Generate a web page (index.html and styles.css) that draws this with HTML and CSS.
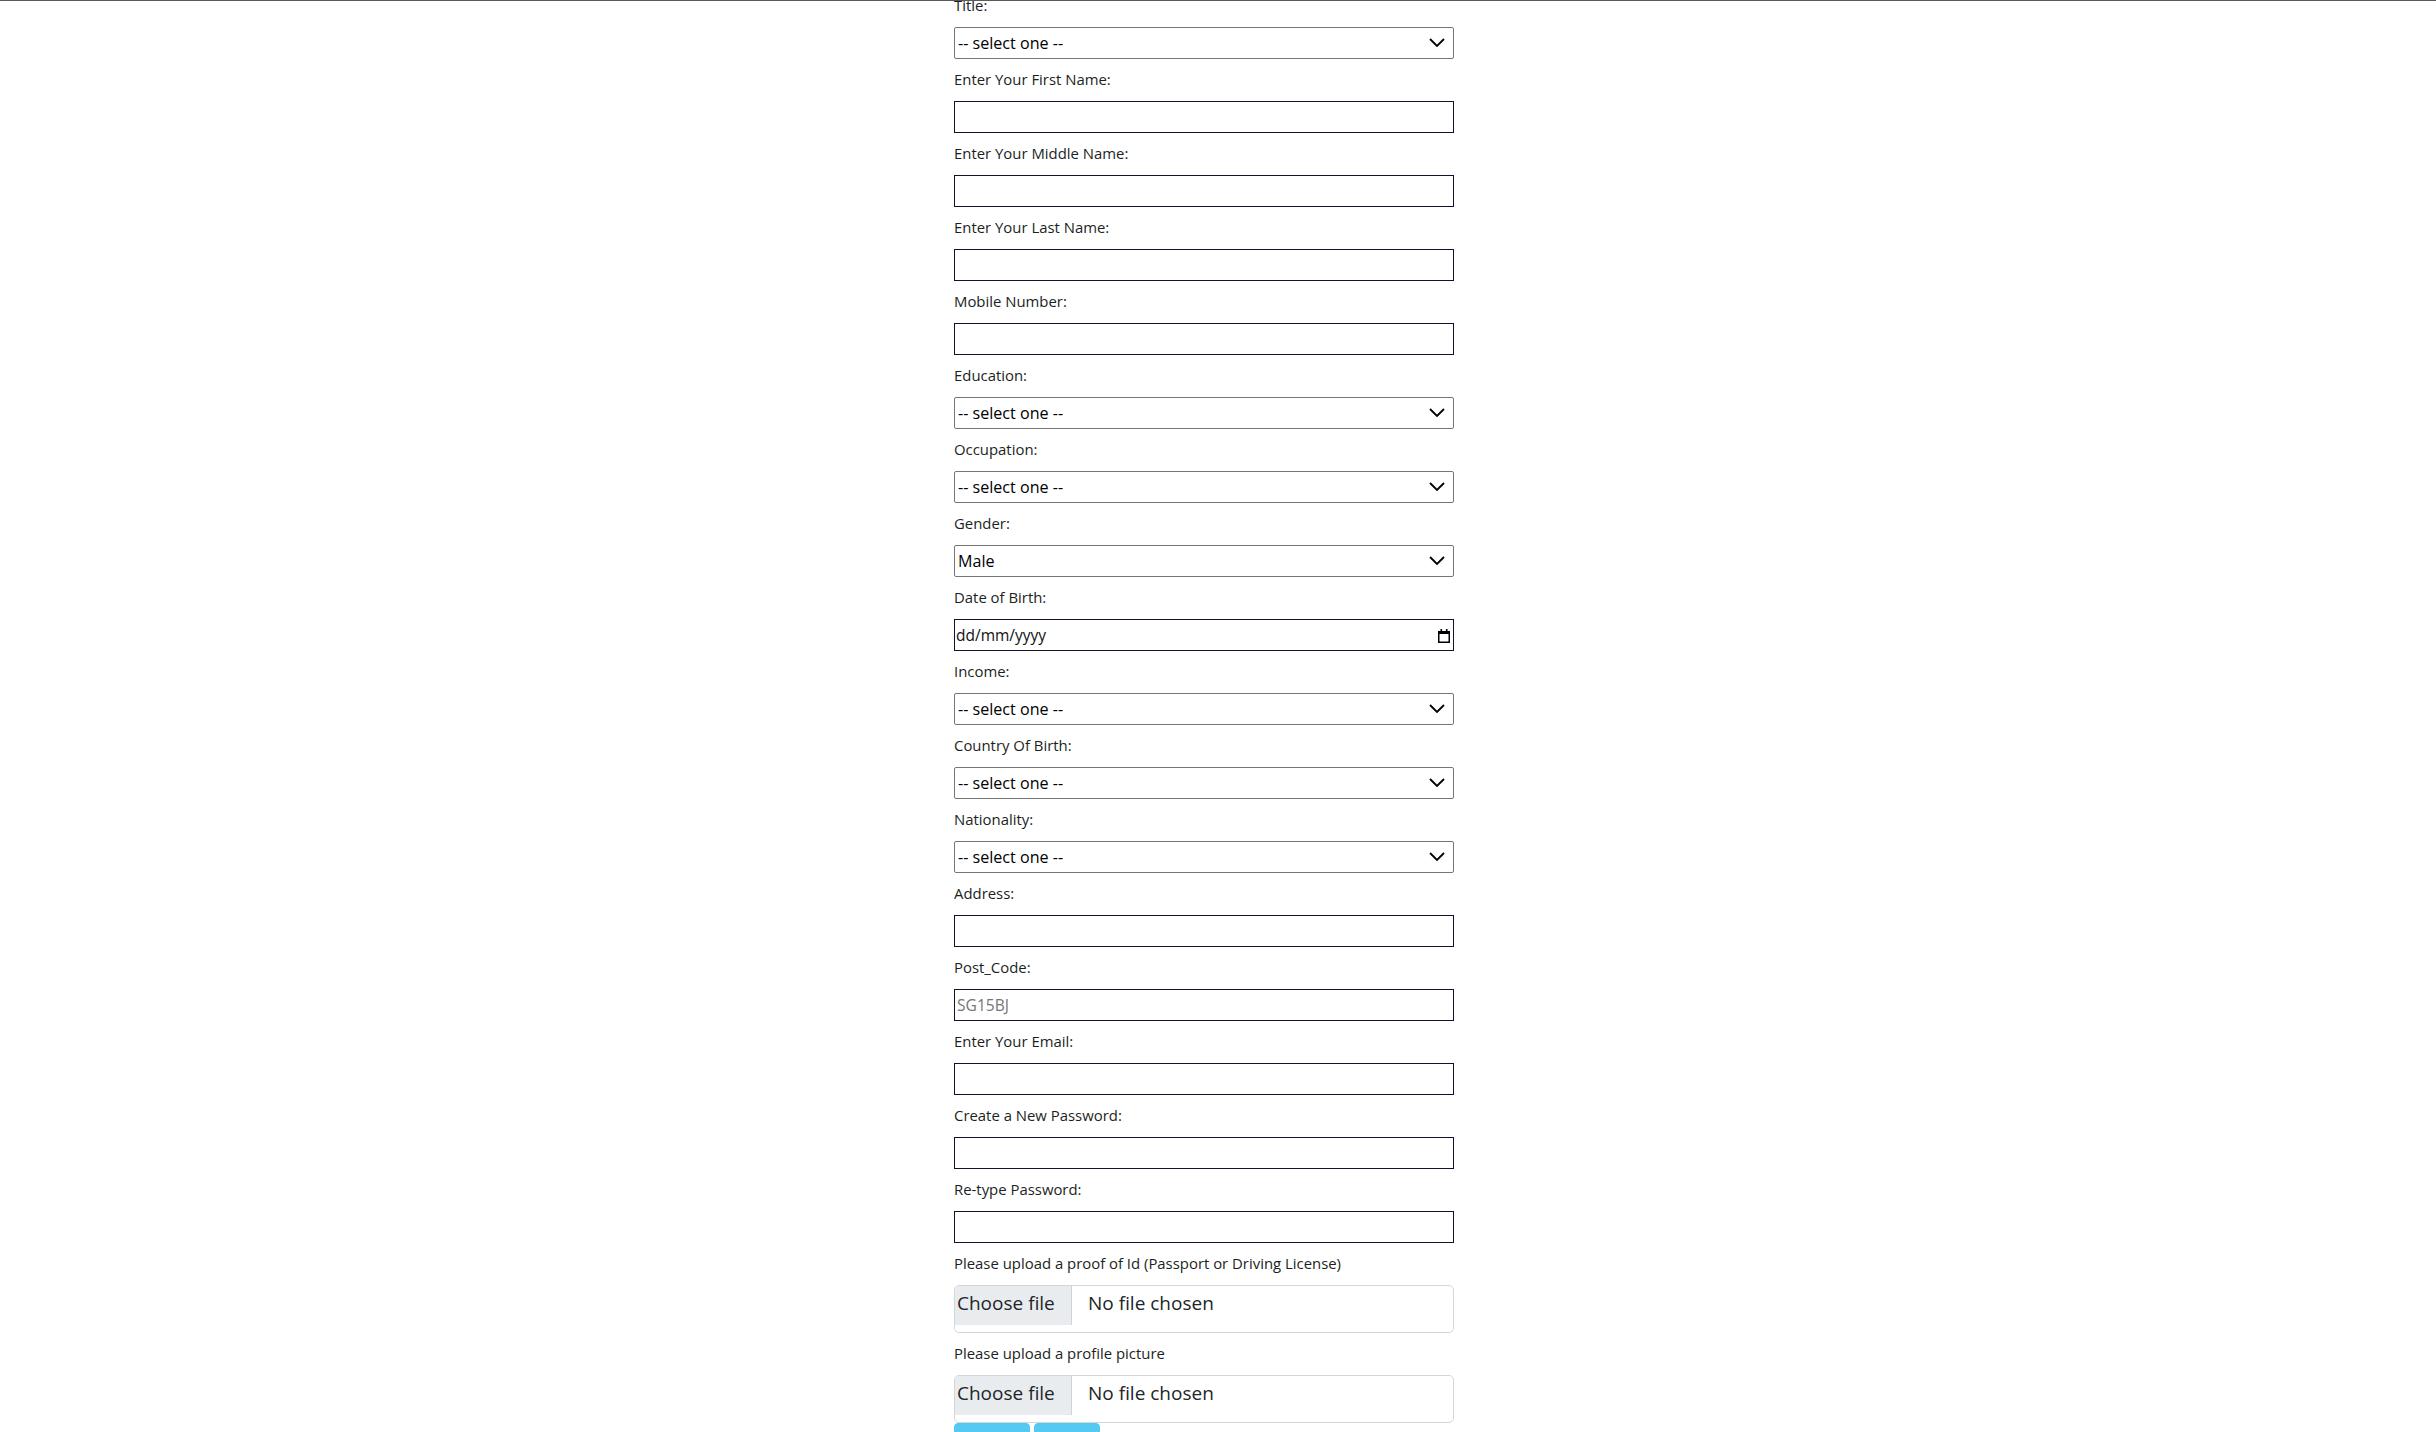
FILE: index.html
```html
<!DOCTYPE html>
<html lang="en">
<head>
<meta charset="utf-8">
<title>Register</title>
<link rel="stylesheet" href="styles.css">
</head>
<body>
<div class="page">
  <form class="form">
    <div class="field">
      <label class="lbl">Title:</label>
      <div class="select-wrap">
        <select class="select"><option>-- select one --</option></select>
        <svg class="chev" width="16" height="9" viewBox="0 0 16 9"><polyline points="1,1 8,8 15,1" fill="none" stroke="#000" stroke-width="1.8"/></svg>
      </div>
    </div>
    <div class="field"><label class="lbl">Enter Your First Name:</label><input class="text" type="text"></div>
    <div class="field"><label class="lbl">Enter Your Middle Name:</label><input class="text" type="text"></div>
    <div class="field"><label class="lbl">Enter Your Last Name:</label><input class="text" type="text"></div>
    <div class="field"><label class="lbl">Mobile Number:</label><input class="text" type="text"></div>
    <div class="field">
      <label class="lbl">Education:</label>
      <div class="select-wrap">
        <select class="select"><option>-- select one --</option></select>
        <svg class="chev" width="16" height="9" viewBox="0 0 16 9"><polyline points="1,1 8,8 15,1" fill="none" stroke="#000" stroke-width="1.8"/></svg>
      </div>
    </div>
    <div class="field">
      <label class="lbl">Occupation:</label>
      <div class="select-wrap">
        <select class="select"><option>-- select one --</option></select>
        <svg class="chev" width="16" height="9" viewBox="0 0 16 9"><polyline points="1,1 8,8 15,1" fill="none" stroke="#000" stroke-width="1.8"/></svg>
      </div>
    </div>
    <div class="field">
      <label class="lbl">Gender:</label>
      <div class="select-wrap">
        <select class="select"><option>Male</option><option>Female</option></select>
        <svg class="chev" width="16" height="9" viewBox="0 0 16 9"><polyline points="1,1 8,8 15,1" fill="none" stroke="#000" stroke-width="1.8"/></svg>
      </div>
    </div>
    <div class="field">
      <label class="lbl">Date of Birth:</label>
      <div class="date-field">
        <span class="date-text">dd/mm/yyyy</span>
        <svg class="cal" width="12" height="14" viewBox="0 0 12 14"><rect x="0.75" y="2.75" width="10.5" height="10.5" fill="none" stroke="#000" stroke-width="1.5"/><rect x="0" y="2" width="12" height="3" fill="#000"/><rect x="2.5" y="0" width="1.6" height="3" fill="#000"/><rect x="7.9" y="0" width="1.6" height="3" fill="#000"/></svg>
      </div>
    </div>
    <div class="field">
      <label class="lbl">Income:</label>
      <div class="select-wrap">
        <select class="select"><option>-- select one --</option></select>
        <svg class="chev" width="16" height="9" viewBox="0 0 16 9"><polyline points="1,1 8,8 15,1" fill="none" stroke="#000" stroke-width="1.8"/></svg>
      </div>
    </div>
    <div class="field">
      <label class="lbl">Country Of Birth:</label>
      <div class="select-wrap">
        <select class="select"><option>-- select one --</option></select>
        <svg class="chev" width="16" height="9" viewBox="0 0 16 9"><polyline points="1,1 8,8 15,1" fill="none" stroke="#000" stroke-width="1.8"/></svg>
      </div>
    </div>
    <div class="field">
      <label class="lbl">Nationality:</label>
      <div class="select-wrap">
        <select class="select"><option>-- select one --</option></select>
        <svg class="chev" width="16" height="9" viewBox="0 0 16 9"><polyline points="1,1 8,8 15,1" fill="none" stroke="#000" stroke-width="1.8"/></svg>
      </div>
    </div>
    <div class="field"><label class="lbl">Address:</label><input class="text" type="text"></div>
    <div class="field"><label class="lbl">Post_Code:</label><input class="text" type="text" placeholder="SG15BJ"></div>
    <div class="field"><label class="lbl">Enter Your Email:</label><input class="text" type="email"></div>
    <div class="field"><label class="lbl">Create a New Password:</label><input class="text" type="password"></div>
    <div class="field"><label class="lbl">Re-type Password:</label><input class="text" type="password"></div>
    <div class="field">
      <span class="lbl">Please upload a proof of Id (Passport or Driving License)</span>
      <label class="file"><input class="file-input" type="file"><span class="file-btn">Choose file</span><span class="file-name">No file chosen</span></label>
    </div>
    <div class="field file-last">
      <span class="lbl">Please upload a profile picture</span>
      <label class="file"><input class="file-input" type="file"><span class="file-btn">Choose file</span><span class="file-name">No file chosen</span></label>
    </div>
    <div class="buttons">
      <button class="btn btn-submit" type="submit">Submit</button>
      <button class="btn btn-reset" type="reset">Reset</button>
    </div>
  </form>
</div>
</body>
</html>
```

FILE: styles.css
```css
html, body {
  margin: 0;
  padding: 0;
  background: #fff;
}

.page {
  height: 100vh;
  box-sizing: border-box;
  border-top: 1px solid #5a5a5a;
  overflow: hidden;
  font-family: "Open Sans", "Noto Sans", sans-serif;
  color: #212529;
}

.form {
  width: 500px;
  margin: -6px 0 0 954px;
}

.field {
  display: flex;
  flex-direction: column;
  margin-bottom: 10px;
}

.field.file-last {
  margin-bottom: 0;
}

.lbl {
  display: block;
  font-size: 14.9px;
  line-height: 21px;
  margin-bottom: 11px;
  color: #1b1f23;
}

.text {
  box-sizing: border-box;
  width: 500px;
  height: 32px;
  margin: 0;
  padding: 1px 2px;
  border: 1px solid #13112e;
  border-radius: 0;
  font-family: "Open Sans", "Noto Sans", sans-serif;
  font-size: 15.6px;
  color: #000;
  background: #fff;
  outline: none;
}

.text::placeholder {
  color: #767676;
}

.select-wrap {
  position: relative;
  width: 500px;
  height: 32px;
}

.select {
  appearance: none;
  -webkit-appearance: none;
  box-sizing: border-box;
  width: 500px;
  height: 32px;
  margin: 0;
  padding: 0 30px 0 3px;
  border: 1px solid #767676;
  border-radius: 2px;
  background: #fff;
  font-family: "Open Sans", "Noto Sans", sans-serif;
  font-size: 16.1px;
  color: #000;
  outline: none;
}

.chev {
  position: absolute;
  right: 9px;
  top: 11px;
  pointer-events: none;
}

.date-field {
  box-sizing: border-box;
  width: 500px;
  height: 32px;
  display: flex;
  align-items: center;
  justify-content: space-between;
  padding: 0 3px 0 1px;
  border: 1px solid #13112e;
  background: #fff;
}

.date-text {
  font-size: 15.5px;
  color: #111;
}

.cal {
  display: block;
  margin-top: 1px;
}

.file {
  box-sizing: border-box;
  width: 500px;
  height: 48px;
  display: flex;
  align-items: flex-start;
  border: 1px solid #d3d7dc;
  border-radius: 5px;
  background: #fff;
  overflow: hidden;
  font-size: 19px;
  color: #212529;
  cursor: pointer;
}

.file-input {
  display: none;
}

.file-btn {
  box-sizing: border-box;
  width: 117px;
  height: 39px;
  padding-left: 2px;
  line-height: 34px;
  background: #e9ecef;
  border-right: 1px solid #ced4da;
  white-space: nowrap;
}

.file-name {
  margin-left: 16px;
  line-height: 34px;
  white-space: nowrap;
}

.buttons {
  display: flex;
  gap: 4px;
  margin-top: 0;
}

.btn {
  box-sizing: border-box;
  height: 38px;
  padding: 6px 12px;
  border: 1px solid #54c9f1;
  border-radius: 4px;
  background: #54c9f1;
  color: #000;
  font-family: "Open Sans", "Noto Sans", sans-serif;
  font-size: 16px;
  line-height: 24px;
}

.btn-submit {
  width: 76px;
}

.btn-reset {
  width: 66px;
}
```
